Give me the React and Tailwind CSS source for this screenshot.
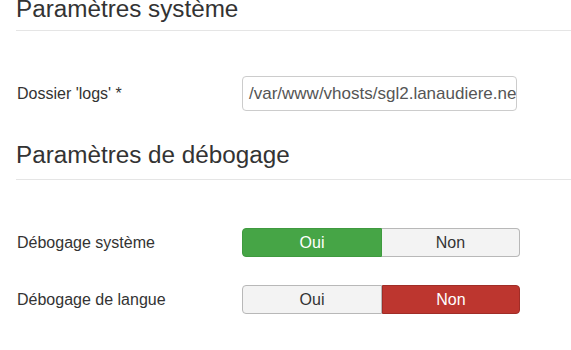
const Toggle = ({ value }) => {
    const yes = value === "oui";
    return (
        <div className="flex w-[278px] h-[29px] text-[16px]">
            <div
                className={
                    yes
                        ? "flex-1 flex items-center justify-center rounded-l-[4px] border border-[#3f9a3f] bg-[#46a546] text-white"
                        : "flex-1 flex items-center justify-center rounded-l-[4px] border border-[#b8b8b8] bg-[#f3f3f3] text-[#333]"
                }
            >
                Oui
            </div>
            <div
                className={
                    yes
                        ? "w-[138px] flex items-center justify-center rounded-r-[4px] border border-l-0 border-[#b8b8b8] bg-[#f3f3f3] text-[#333]"
                        : "w-[138px] flex items-center justify-center rounded-r-[4px] border border-[#a02d27] bg-[#bd362f] text-white"
                }
            >
                Non
            </div>
        </div>
    );
};

const Row = ({ label, children, className }) => (
    <div className={"flex items-center " + className}>
        <div className="w-[225px] text-[16px] text-[#333]">{label}</div>
        {children}
    </div>
);

export default function App() {
    return (
        <div className="w-[571px] h-[350px] overflow-hidden bg-white pl-4 font-['Liberation_Sans',Arial,sans-serif]">
            <h2 className="-mt-[3px] text-[24.25px] leading-[24px] text-[#333] pb-[9px] border-b border-[#e5e5e5]">
                Paramètres système
            </h2>

            <Row label="Dossier 'logs' *" className="mt-[45px] pl-[1px]">
                <div className="w-[275px] h-[35px] rounded-[4px] border border-[#cccccc] pl-[6px] flex items-center overflow-hidden">
                    <span className="whitespace-nowrap text-[17px] text-[#555]">/var/www/vhosts/sgl2.lanaudiere.net/logs</span>
                </div>
            </Row>

            <h2 className="mt-[32px] text-[24.25px] leading-[24px] text-[#333] pb-[12px] border-b border-[#e5e5e5]">
                Paramètres de débogage
            </h2>

            <Row label="Débogage système" className="mt-[48px] pl-[1px]">
                <Toggle value="oui" />
            </Row>
            <Row label="Débogage de langue" className="mt-[28px] pl-[1px]">
                <Toggle value="non" />
            </Row>
        </div>
    );
}
